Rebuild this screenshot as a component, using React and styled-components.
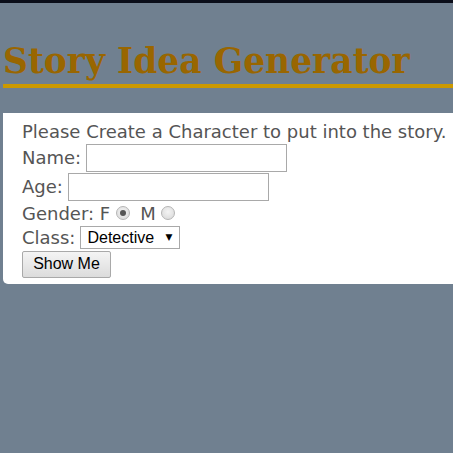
import React from "react";
import styled, { createGlobalStyle } from "styled-components";

const Global = createGlobalStyle`
  html, body { margin: 0; padding: 0; }
  body { background: #708090; overflow: hidden; }
`;

const TopBar = styled.div`
  height: 3px;
  background: #0b0e1a;
`;

const Page = styled.div`
  padding-left: 3px;
`;

const Title = styled.h1`
  margin: 0;
  padding-top: 36px;
  font-family: "DejaVu Serif", Georgia, serif;
  font-weight: bold;
  font-size: 34.5px;
  line-height: 45px;
  color: #996600;
  border-bottom: 4px solid #cc9900;
  white-space: nowrap;
  overflow: hidden;
`;

const Panel = styled.form`
  margin-top: 25px;
  background: #fff;
  border-bottom-left-radius: 5px;
  padding: 6px 0 6px 19px;
  font-family: "DejaVu Sans", "Open Sans", sans-serif;
  font-size: 18px;
  color: #555;
`;

const Line = styled.div`
  display: flex;
  align-items: center;
  height: ${(p) => p.h || 28}px;
  white-space: nowrap;
  gap: ${(p) => p.gap ?? 5}px;
`;

const TextInput = styled.input`
  box-sizing: border-box;
  width: 201px;
  height: 28px;
  border: 1px solid #a9a9a9;
  padding: 1px 2px;
  font-size: 16px;
`;

const Radio = styled.input`
  appearance: none;
  box-sizing: border-box;
  margin: 0 ${(p) => p.mr ?? 0}px 0 ${(p) => p.ml ?? 0}px;
  width: 14px;
  height: 14px;
  border-radius: 50%;
  border: 1px solid #b5b5b5;
  background: radial-gradient(circle at 50% 40%, #f4f4f4, #d6d6d6);
  position: relative;
  &:checked::after {
    content: "";
    position: absolute;
    left: 3px;
    top: 3px;
    width: 6px;
    height: 6px;
    border-radius: 50%;
    background: #555;
  }
`;

const SelectWrap = styled.span`
  position: relative;
  display: inline-flex;
  &::after {
    content: "▼";
    position: absolute;
    right: 8px;
    top: 6px;
    font-family: "DejaVu Sans", sans-serif;
    font-size: 9px;
    color: #000;
    pointer-events: none;
  }
`;

const Select = styled.select`
  appearance: none;
  box-sizing: border-box;
  height: 23px;
  width: 100px;
  font-family: "Liberation Sans", Arial, sans-serif;
  font-size: 16px;
  border: 1px solid #a9a9a9;
  border-radius: 0;
  background: #fff;
  color: #000;
  padding: 0 0 0 6px;
`;

const Button = styled.button`
  box-sizing: border-box;
  height: 27px;
  width: 89px;
  padding: 0;
  font-family: "Liberation Sans", Arial, sans-serif;
  font-size: 16px;
  color: #000;
  border: 1px solid #a9a9a9;
  border-radius: 2px;
  background: linear-gradient(#f4f4f4, #dcdcdc);
`;

export default function App() {
  return (
    <>
      <Global />
      <TopBar />
      <Page>
        <Title>Story Idea Generator</Title>
        <Panel onSubmit={(e) => e.preventDefault()}>
          <Line h={24}>Please Create a Character to put into the story.</Line>
          <Line h={29}>
            Name: <TextInput type="text" />
          </Line>
          <Line h={29}>
            Age: <TextInput type="text" />
          </Line>
          <Line h={24} gap={0}>
            Gender: F<Radio type="radio" name="g" defaultChecked ml={6} mr={10} />M
            <Radio type="radio" name="g" ml={5} />
          </Line>
          <Line h={25}>
            Class:
            <SelectWrap>
              <Select defaultValue="Detective">
                <option>Detective</option>
                <option>Wizard</option>
                <option>Knight</option>
              </Select>
            </SelectWrap>
          </Line>
          <Line h={28}>
            <Button type="submit">Show Me</Button>
          </Line>
        </Panel>
      </Page>
    </>
  );
}
